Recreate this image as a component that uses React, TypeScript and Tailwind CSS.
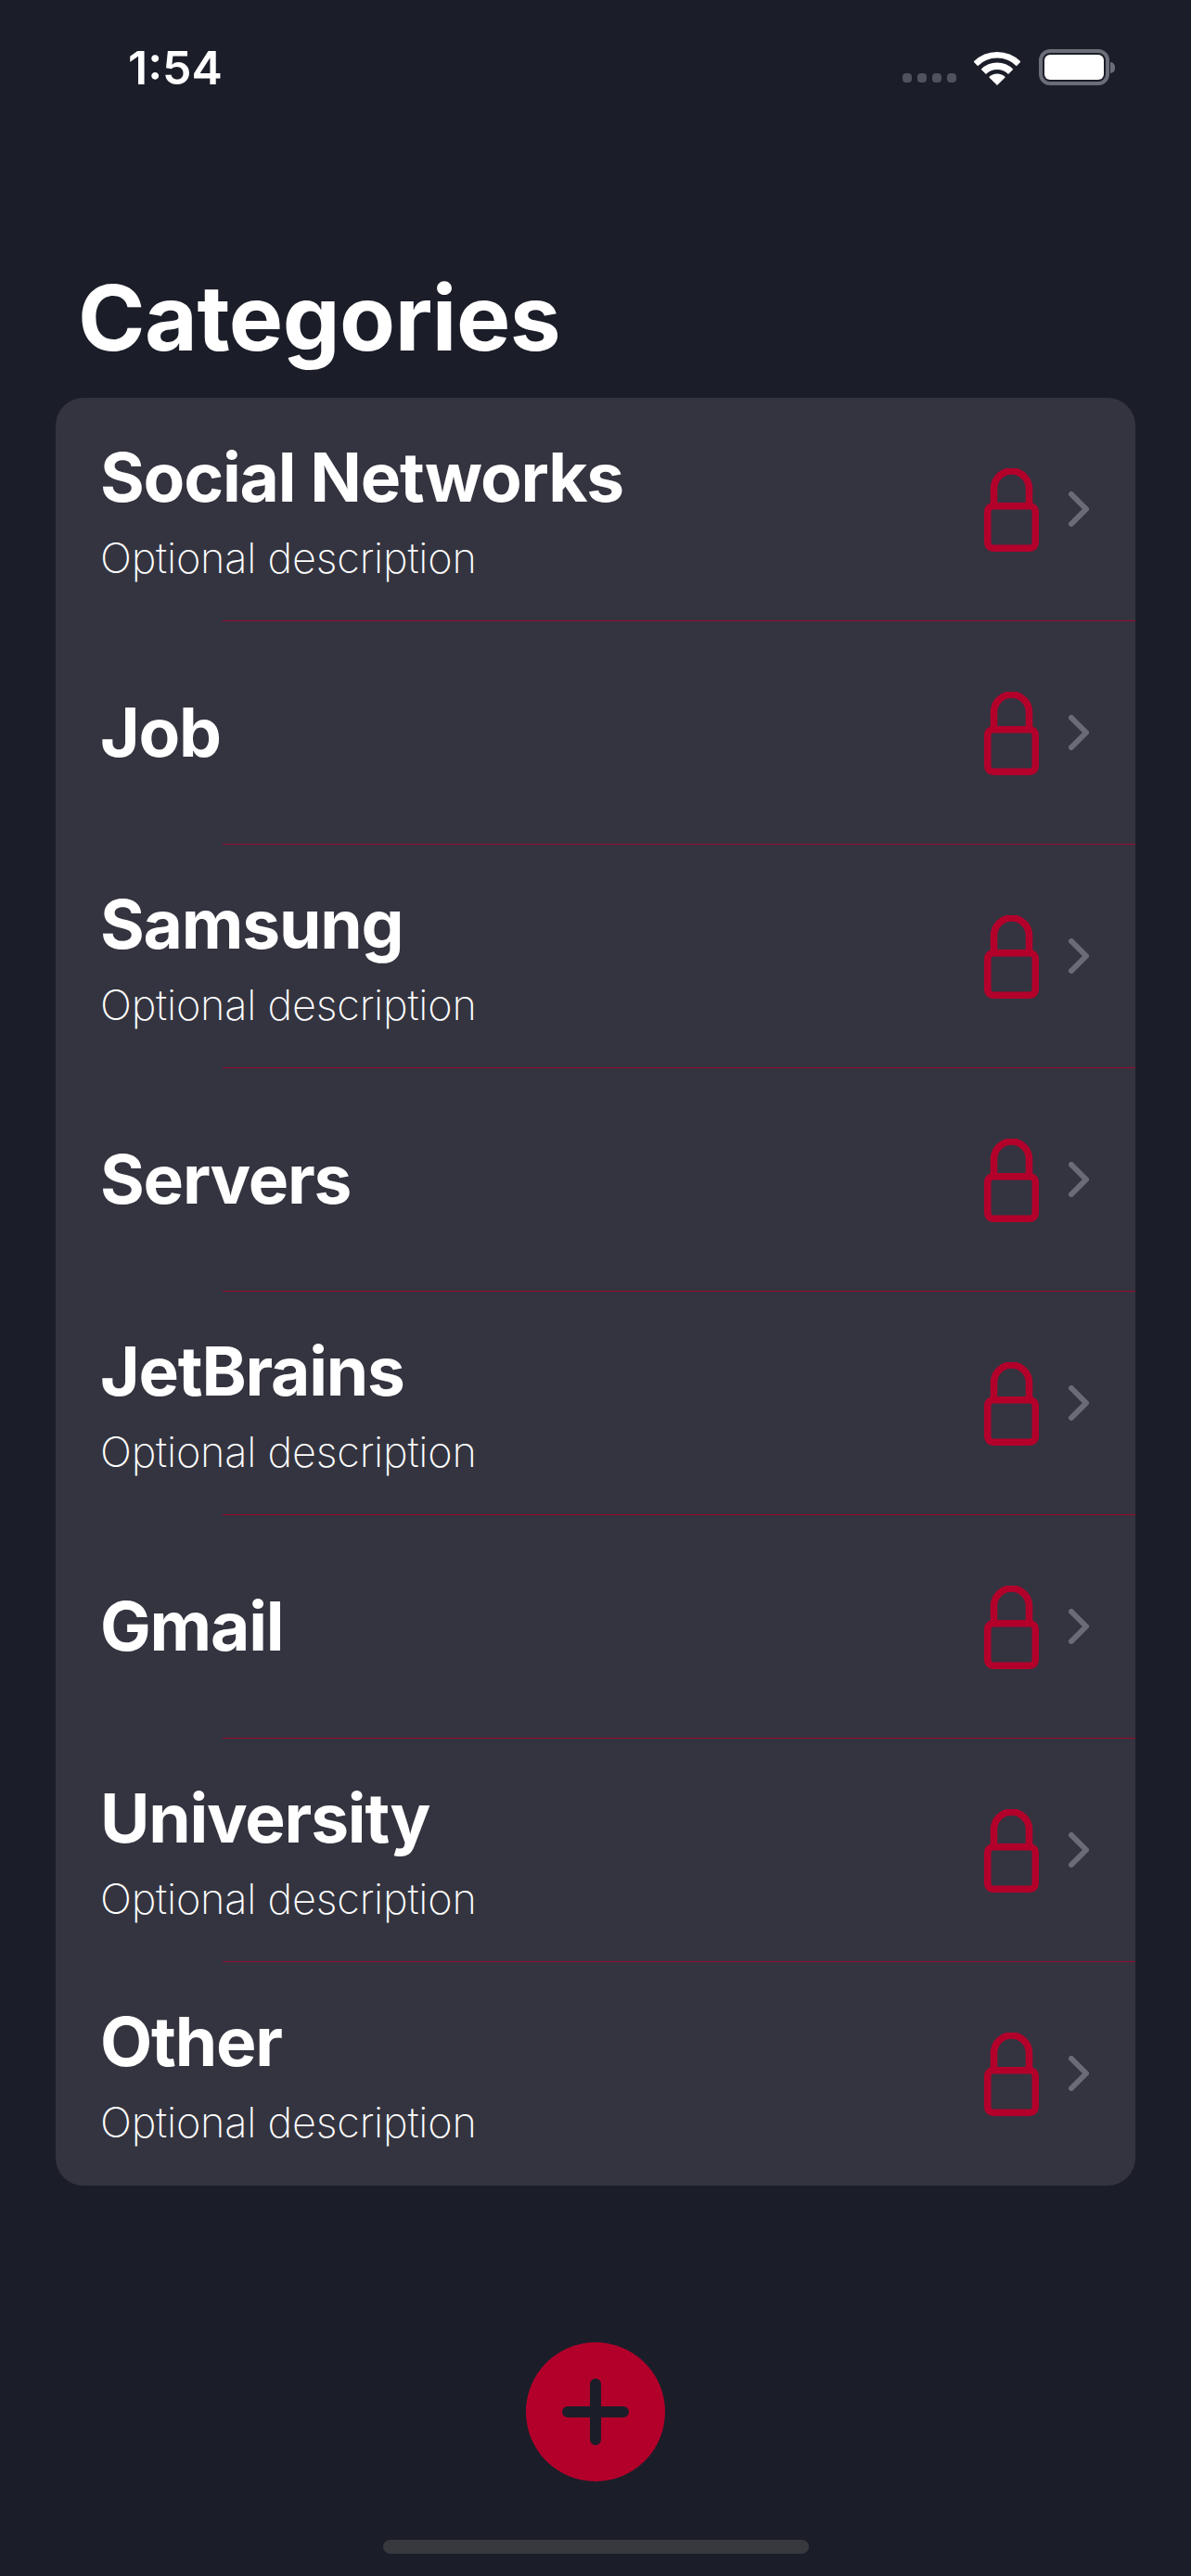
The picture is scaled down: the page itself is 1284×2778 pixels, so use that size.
const rows = [
  { title: "Social Networks", description: "Optional description" },
  { title: "Job" },
  { title: "Samsung", description: "Optional description" },
  { title: "Servers" },
  { title: "JetBrains", description: "Optional description" },
  { title: "Gmail" },
  { title: "University", description: "Optional description" },
  { title: "Other", description: "Optional description" },
];

function Lock() {
  return (
    <svg width="59" height="90" viewBox="0 0 59 90" fill="none" stroke="#b3002b" strokeWidth="7.5" className="mt-[2px]">
      <path d="M10.5 40V22a19 19 0 0 1 38 0V40" />
      <rect x="3.75" y="40.75" width="51.5" height="45.5" rx="6" />
    </svg>
  );
}

function Chevron() {
  return (
    <svg width="22" height="38" viewBox="0 0 22 38" fill="none" stroke="#6b6b78" strokeWidth="6" strokeLinecap="round" strokeLinejoin="round">
      <path d="M3 3l16 16L3 35" />
    </svg>
  );
}

function Wifi() {
  return (
    <svg width="50" height="37" viewBox="0 0 50 37" fill="none" stroke="#ffffff">
      <path d="M1.84 13.84a32.75 32.75 0 0 1 46.32 0" strokeWidth="6.5" />
      <path d="M10.33 22.33a20.75 20.75 0 0 1 29.34 0" strokeWidth="7.5" />
      <path d="M25 37L16.16 28.16a12.5 12.5 0 0 1 17.68 0Z" fill="#ffffff" stroke="none" />
    </svg>
  );
}

function StatusBar() {
  return (
    <div className="flex items-start justify-between pt-[48px] pl-[138px] pr-[82px] h-[108px]">
      <span className="text-[50px] leading-[50px] font-semibold text-white">1:54</span>
      <div className="flex items-end pt-[5px]">
        <div className="flex gap-[6px] mb-[3px] mr-[19px]">
          <div className="w-[10px] h-[10px] rounded-[4px] bg-[#50525c]"></div>
          <div className="w-[10px] h-[10px] rounded-[4px] bg-[#50525c]"></div>
          <div className="w-[10px] h-[10px] rounded-[4px] bg-[#50525c]"></div>
          <div className="w-[10px] h-[10px] rounded-[4px] bg-[#50525c]"></div>
        </div>
        <Wifi />
        <div className="flex items-center ml-[20px]">
          <div className="w-[76px] h-[39px] rounded-[12px] border-[4px] border-[#6b6e76] p-[2px]">
            <div className="w-full h-full rounded-[6px] bg-white"></div>
          </div>
          <div className="w-[5px] h-[12px] ml-[1px] rounded-r-[5px] bg-[#6b6e76]"></div>
        </div>
      </div>
    </div>
  );
}

function CategoryRow({ title, description }: { title: string; description?: string }) {
  return (
    <div className="flex items-center h-[240px] pl-[48px] pr-[50px]">
      <div className={description ? "flex-1 flex flex-col justify-center pt-[4px]" : "flex-1 flex flex-col justify-center"}>
        <div className="text-[73px] leading-[86px] font-bold tracking-[-1.2px] text-white">{title}</div>
        {description && (
          <div className="mt-[16px] text-[45px] leading-[56px] font-[150] tracking-[-0.2px] text-white">{description}</div>
        )}
      </div>
      <Lock />
      <div className="ml-[32px]">
        <Chevron />
      </div>
    </div>
  );
}

export default function App() {
  return (
    <div className="w-[1284px] h-[2778px] bg-[#1b1e29] font-['Inter',sans-serif] flex flex-col">
      <StatusBar />
      <h1 className="mt-[177px] ml-[84px] text-[98px] leading-[116px] font-bold tracking-[-0.5px] text-white h-[144px]">Categories</h1>
      <div className="mx-[60px] pb-px rounded-[30px] bg-[#343440]">
        {rows.map((row, i) => (
          <div key={row.title}>
            <CategoryRow title={row.title} description={row.description} />
            {i < rows.length - 1 && <div className="ml-[180px] h-px bg-[#b3002b]/80"></div>}
          </div>
        ))}
      </div>
      <button className="self-center mt-[169px] w-[150px] h-[150px] rounded-full bg-[#b3002b] flex items-center justify-center">
        <svg width="72" height="72" viewBox="0 0 72 72" stroke="#1b1e29" strokeWidth="12" strokeLinecap="round">
          <path d="M36 6v60M6 36h60" />
        </svg>
      </button>
      <div className="self-center mt-[63px] w-[459px] h-[15px] rounded-full bg-[#38393f]"></div>
    </div>
  );
}
